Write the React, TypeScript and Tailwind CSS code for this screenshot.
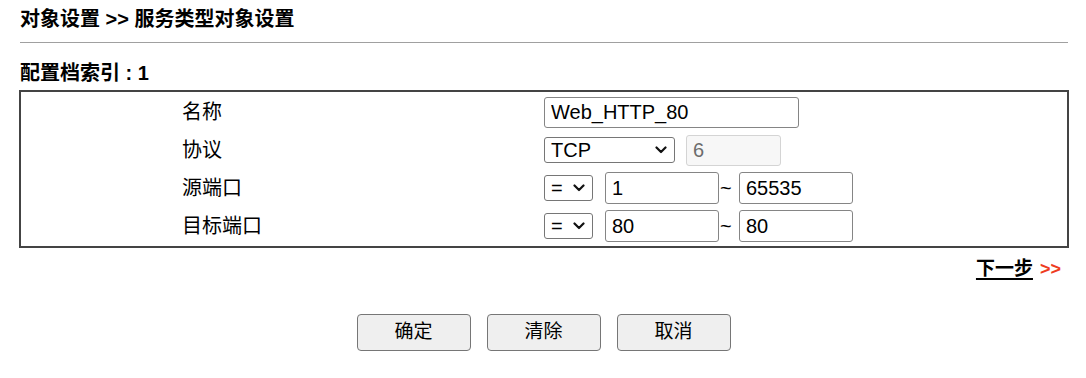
import { ReactNode } from 'react'

const FONT = '"Liberation Sans", Arial, "Noto Sans CJK SC", sans-serif'

function Chevron() {
  return (
    <svg width="12" height="8" viewBox="0 0 12 8" className="pointer-events-none absolute right-[7px] top-1/2 -translate-y-1/2">
      <path d="M1.5 1.5 L6 6 L10.5 1.5" fill="none" stroke="#111" strokeWidth="2.2" strokeLinecap="round" strokeLinejoin="round" />
    </svg>
  )
}

function Select({ value, className }: { value: string; className: string }) {
  return (
    <div className={`relative flex items-center rounded-[3px] border border-[#767676] bg-white pl-[6px] text-[20px] text-black ${className}`}>
      <span className="leading-none">{value}</span>
      <Chevron />
    </div>
  )
}

function TextInput({ value, className, disabled }: { value: string; className: string; disabled?: boolean }) {
  return (
    <input
      readOnly
      value={value}
      disabled={disabled}
      className={`rounded-[3px] border px-[6px] text-[20px] outline-none ${
        disabled ? 'border-[#d4d4d4] bg-[#f7f7f7] text-[#6d6d6d]' : 'border-[#858585] bg-white text-black'
      } ${className}`}
      style={{ fontFamily: FONT }}
    />
  )
}

function Row({ label, children }: { label: string; children: ReactNode }) {
  return (
    <div className="flex h-[38px] items-center">
      <div className="w-[523px] pl-[161px] text-[20px] text-black">{label}</div>
      <div className="flex items-center">{children}</div>
    </div>
  )
}

export default function App() {
  return (
    <div className="h-[378px] w-[1086px] bg-white" style={{ fontFamily: FONT }}>
      <div className="ml-[19px] w-[1050px]">
        <div className="pt-[7px] pl-px text-[20px] font-bold leading-[24px] text-black">对象设置 &gt;&gt; 服务类型对象设置</div>
        <div className="mt-[11px] ml-px mr-px h-px bg-[#a0a0a0]" />
        <div className="mt-[18px] pl-px text-[20px] font-bold leading-[24px] text-black">配置档索引 : 1</div>

        <div className="mt-[5px] border-2 border-[#444] py-px">
          <Row label="名称">
            <TextInput value="Web_HTTP_80" className="h-[31px] w-[255px]" />
          </Row>
          <Row label="协议">
            <Select value="TCP" className="h-[26px] w-[131px]" />
            <TextInput value="6" disabled className="ml-[11px] h-[31px] w-[95px]" />
          </Row>
          <Row label="源端口">
            <Select value="=" className="h-[26px] w-[49px]" />
            <TextInput value="1" className="ml-[12px] h-[32px] w-[114px]" />
            <span className="w-[20px] pl-px text-[20px] text-black">~</span>
            <TextInput value="65535" className="h-[32px] w-[114px]" />
          </Row>
          <Row label="目标端口">
            <Select value="=" className="h-[26px] w-[49px]" />
            <TextInput value="80" className="ml-[12px] h-[32px] w-[114px]" />
            <span className="w-[20px] pl-px text-[20px] text-black">~</span>
            <TextInput value="80" className="h-[32px] w-[114px]" />
          </Row>
        </div>

        <div className="mt-[9px] flex items-center justify-end pr-[8px] font-bold leading-[24px]">
          <a href="#" className="text-[19px] text-black underline decoration-2 underline-offset-[3px]">下一步</a>
          <span className="ml-[7px] text-[18px] text-[#ee3d1f]">&gt;&gt;</span>
        </div>
      </div>

      <div className="mt-[33px] flex justify-center gap-[16px] pl-px">
        {['确定', '清除', '取消'].map((t) => (
          <button
            key={t}
            className="h-[37px] w-[114px] rounded-[4px] border border-[#767676] bg-[#efefef] text-[19px] text-black"
            style={{ fontFamily: FONT }}
          >
            {t}
          </button>
        ))}
      </div>
    </div>
  )
}
